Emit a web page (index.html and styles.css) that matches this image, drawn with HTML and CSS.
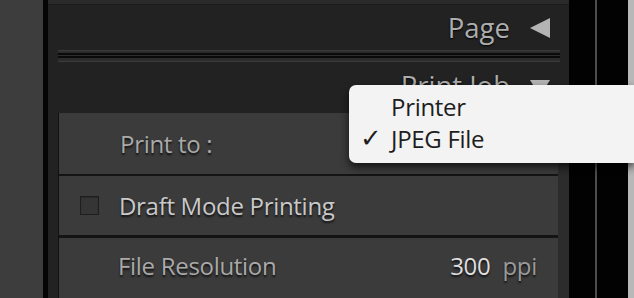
FILE: index.html
```html
<!DOCTYPE html>
<html>
<head>
<meta charset="utf-8">
<link rel="stylesheet" href="styles.css">
</head>
<body>
<div class="app">
  <div class="gutter"></div>
  <div class="divider"></div>
  <div class="panel">
    <div class="topstrip"></div>
    <div class="header page-header">
      <span class="header-title">Page</span>
      <svg class="tri" width="20" height="20" viewBox="0 0 20 20"><polygon points="0,10 20,0 20,20" fill="#b4b4b4"/></svg>
    </div>
    <div class="rule"><div class="rule-line"></div><div class="rule-line"></div></div>
    <div class="header job-header">
      <span class="header-title">Print Job</span>
      <svg class="tri tri-down" width="20" height="20" viewBox="0 0 20 20"><polygon points="0,0 20,0 10,16" fill="#b4b4b4"/></svg>
    </div>
    <div class="rows">
      <div class="row row-print">
        <span class="label dim">Print to :</span>
      </div>
      <div class="row row-draft">
        <span class="checkbox"></span>
        <span class="label">Draft Mode Printing</span>
      </div>
      <div class="row row-res">
        <span class="label dim">File Resolution</span>
        <span class="value"><span class="num">300</span><span class="unit">ppi</span></span>
      </div>
    </div>
  </div>
  <div class="black a"></div>
  <div class="greyline"></div>
  <div class="black b"></div>
  <div class="edge"></div>
</div>
<div class="menu">
  <div class="menu-item"><span class="check"></span>Printer</div>
  <div class="menu-item"><span class="check">✓</span>JPEG File</div>
</div>
</body>
</html>
```

FILE: styles.css
```css
html, body {
  margin: 0;
  padding: 0;
}
body {
  width: 634px;
  height: 298px;
  overflow: hidden;
  background: #3c3c3c;
  font-family: "Open Sans", "Liberation Sans", sans-serif;
  position: relative;
}
.app {
  display: flex;
  height: 298px;
}
.gutter {
  width: 43px;
  background: #3d3d3d;
}
.divider {
  width: 5px;
  background: #050505;
}
.panel {
  width: 521px;
  background: #222222;
  display: flex;
  flex-direction: column;
  padding-left: 10px;
  box-sizing: border-box;
}
.topstrip {
  height: 4px;
  background: #2a2a2a;
  margin-left: -10px;
  border-bottom: 1px solid #1c1c1c;
}
.header {
  display: flex;
  justify-content: flex-end;
  align-items: center;
  padding-right: 19px;
  gap: 20px;
  color: #adadad;
  font-size: 27.5px;
  line-height: 34px;
  text-shadow: 0 1px 2px #000;
}
.page-header {
  height: 45px;
  padding-top: 0;
  box-sizing: border-box;
}
.job-header {
  height: 51px;
  align-items: flex-start;
  padding-top: 7px;
  box-sizing: border-box;
}
.tri {
  display: block;
}
.tri-down {
  margin-top: 11px;
}
.rule {
  height: 12px;
  margin-right: 9px;
  background: #2c2c2c;
  display: flex;
  flex-direction: column;
  justify-content: space-between;
  padding: 2px 0 3px;
  box-sizing: border-box;
  border-top: 1px solid #3a3a3a;
  border-bottom: 1px solid #3a3a3a;
}
.rule-line {
  height: 2px;
  background: #0a0a0a;
}
.rows {
  flex: 1;
  display: flex;
  flex-direction: column;
  gap: 2px;
  background: #141414;
  border-left: 1px solid #111;
  box-shadow: inset -11px 0 0 #2c2c2c;
  padding-right: 11px;
}
.row {
  background: #3b3b3b;
  display: flex;
  align-items: center;
  color: #c9c9c9;
  font-size: 24px;
  text-shadow: 0 2px 2px #111;
  letter-spacing: -0.3px;
}
.row-print {
  height: 61px;
  padding-left: 61px;
}
.row-draft {
  height: 59px;
  padding-left: 21px;
  margin-bottom: 1px;
}
.row-res {
  flex: 1;
  padding-left: 59px;
  padding-right: 21px;
  justify-content: space-between;
  align-items: flex-start;
  padding-top: 11px;
}
.dim {
  color: #a9a9a9;
}
.checkbox {
  width: 17px;
  height: 17px;
  border: 1px solid #1e1e1e;
  background: #353535;
  box-shadow: inset 0 1px 1px #2a2a2a;
  margin-right: 20px;
  flex: none;
}
.num {
  color: #dedede;
  margin-right: 12px;
}
.unit {
  color: #9a9a9a;
}
.black {
  background: #020202;
}
.black.a {
  width: 26px;
}
.black.b {
  width: 31px;
}
.greyline {
  width: 2px;
  background: #4c4c4c;
}
.edge {
  width: 6px;
  background: #b8b8b8;
}
.menu {
  position: absolute;
  left: 349px;
  top: 85px;
  width: 285px;
  height: 78px;
  background: #f3f3f3;
  border-radius: 7px 0 0 7px;
  box-shadow: 0 4px 8px rgba(0, 0, 0, 0.7);
  padding-top: 5px;
  box-sizing: border-box;
}
.menu-item {
  display: flex;
  align-items: center;
  height: 32px;
  font-size: 24px;
  color: #1e1e1e;
  letter-spacing: -0.3px;
}
.check {
  width: 42px;
  padding-left: 11px;
  box-sizing: border-box;
  font-family: "DejaVu Sans", sans-serif;
  font-size: 26px;
  line-height: 32px;
}
```
